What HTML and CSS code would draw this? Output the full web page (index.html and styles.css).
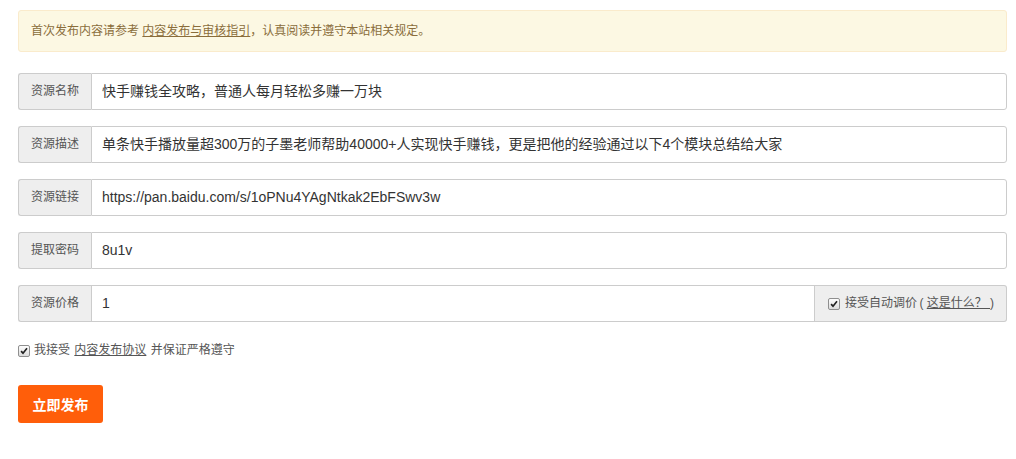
FILE: index.html
```html
<!DOCTYPE html>
<html lang="zh-CN">
<head>
<meta charset="utf-8">
<title>发布资源</title>
<link rel="stylesheet" href="styles.css">
</head>
<body>
<div class="wrap">
  <div class="alert">首次发布内容请参考 <a class="link" href="#">内容发布与审核指引</a>，认真阅读并遵守本站相关规定。</div>

  <div class="group">
    <span class="addon">资源名称</span>
    <div class="field">快手赚钱全攻略，普通人每月轻松多赚一万块</div>
  </div>
  <div class="group">
    <span class="addon">资源描述</span>
    <div class="field">单条快手播放量超300万的子墨老师帮助40000+人实现快手赚钱，更是把他的经验通过以下4个模块总结给大家</div>
  </div>
  <div class="group">
    <span class="addon">资源链接</span>
    <div class="field">https://pan.baidu.com/s/1oPNu4YAgNtkak2EbFSwv3w</div>
  </div>
  <div class="group">
    <span class="addon">提取密码</span>
    <div class="field">8u1v</div>
  </div>
  <div class="group">
    <span class="addon">资源价格</span>
    <div class="field field-mid">1</div>
    <span class="addon addon-right"><span class="check"><svg viewBox="0 0 12 12" width="10" height="10"><path d="M2.5 6.2 L4.8 8.6 L9.6 2.8" fill="none" stroke="#222" stroke-width="2"/></svg></span>接受自动调价&thinsp;(&nbsp;<a class="link" href="#">这是什么？&nbsp;</a>)</span>
  </div>

  <div class="agree"><span class="check"><svg viewBox="0 0 12 12" width="10" height="10"><path d="M2.5 6.2 L4.8 8.6 L9.6 2.8" fill="none" stroke="#222" stroke-width="2"/></svg></span>我接受 <a class="link" href="#">内容发布协议</a> 并保证严格遵守</div>

  <button class="btn" type="button">立即发布</button>
</div>
</body>
</html>
```

FILE: styles.css
```css
* { box-sizing: border-box; }
html, body { margin: 0; padding: 0; background: #fff; }
body {
  font-family: "Liberation Sans", Arial, "Noto Sans CJK SC", sans-serif;
  color: #333;
}
.wrap {
  width: 989px;
  margin-left: 18px;
  padding-top: 10px;
}
.alert {
  height: 42px;
  background: #fcf8e3;
  border: 1px solid #faebcc;
  border-radius: 3px;
  color: #8a6d3b;
  font-size: 12px;
  line-height: 40px;
  padding: 0 12px;
  margin-bottom: 21px;
}
.link { color: inherit; text-decoration: underline; }
.alert .link { color: #8a6d3b; }
.group {
  display: flex;
  height: 37px;
  margin-bottom: 16px;
}
.addon {
  flex: none;
  width: 73px;
  background: #eee;
  border: 1px solid #ccc;
  border-right: 0;
  border-radius: 3px 0 0 3px;
  color: #555;
  font-size: 12px;
  line-height: 35px;
  padding: 0 12px;
  white-space: nowrap;
}
.field {
  flex: 1;
  border: 1px solid #ccc;
  border-radius: 0 3px 3px 0;
  font-size: 14px;
  line-height: 35px;
  padding: 0 10px;
  color: #333;
  white-space: nowrap;
  overflow: hidden;
}
.field-mid { border-radius: 0; }
.addon-right {
  width: 192px;
  border: 1px solid #ccc;
  border-left: 0;
  border-radius: 0 3px 3px 0;
  padding: 0 0 0 13px;
  color: #555;
}
.check {
  display: inline-flex;
  align-items: center;
  justify-content: center;
  vertical-align: -2px;
  width: 12px;
  height: 12px;
  border: 1px solid #8f8f8f;
  border-radius: 2px;
  background: linear-gradient(#fdfdfd, #dcdcdc);
  margin-right: 5px;
}
.agree {
  font-size: 12px;
  color: #555;
  line-height: 16px;
  margin-top: 20px;
}
.agree .link { color: #555; margin: 0 1px; }
.agree .check { margin-right: 4px; }
.btn {
  display: block;
  margin-top: 27px;
  width: 85px;
  height: 38px;
  border: 0;
  border-radius: 3px;
  background: #ff5e0a;
  color: #fff;
  font-family: "Noto Sans CJK SC", sans-serif;
  font-weight: bold;
  font-size: 14px;
  padding: 0;
}
```
